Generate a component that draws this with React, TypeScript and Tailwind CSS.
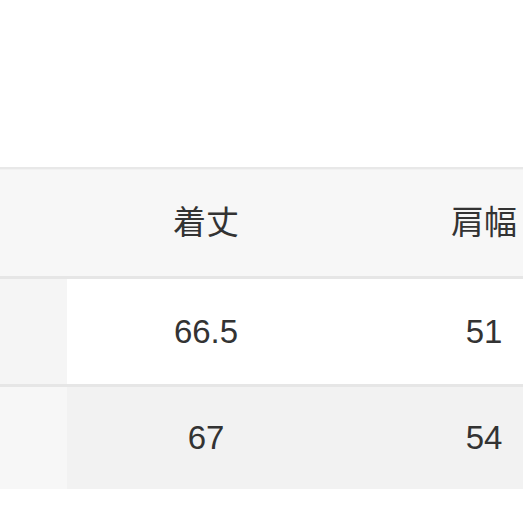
import React from "react";

const font = { fontFamily: '"Liberation Sans", "Noto Sans CJK JP", sans-serif' };

export default function App() {
  return (
    <div className="w-[523px] h-[523px] bg-white overflow-hidden" style={font}>
      <div className="h-[167px]" />
      <div className="w-[640px] text-[33px] text-[#333]">
        <div className="h-[2px] bg-[#e8e8e8]" />
        <div className="grid grid-cols-[67px_278px_278px] h-[107px] bg-[#f7f7f7] border-t border-[#f1f1f1]">
          <div />
          <div className="flex items-center justify-center">着丈</div>
          <div className="flex items-center justify-center">肩幅</div>
        </div>
        <div className="h-[3px] bg-[#e6e6e6]" />
        <div className="grid grid-cols-[67px_278px_278px] h-[105px]">
          <div className="bg-[#f5f5f5]" />
          <div className="flex items-center justify-center bg-white">66.5</div>
          <div className="flex items-center justify-center bg-white">51</div>
        </div>
        <div className="h-[3px] bg-[#e6e6e6]" />
        <div className="grid grid-cols-[67px_278px_278px] h-[102px] bg-[#f2f2f2]">
          <div className="bg-[#f7f7f7]" />
          <div className="flex items-center justify-center">67</div>
          <div className="flex items-center justify-center">54</div>
        </div>
      </div>
    </div>
  );
}
